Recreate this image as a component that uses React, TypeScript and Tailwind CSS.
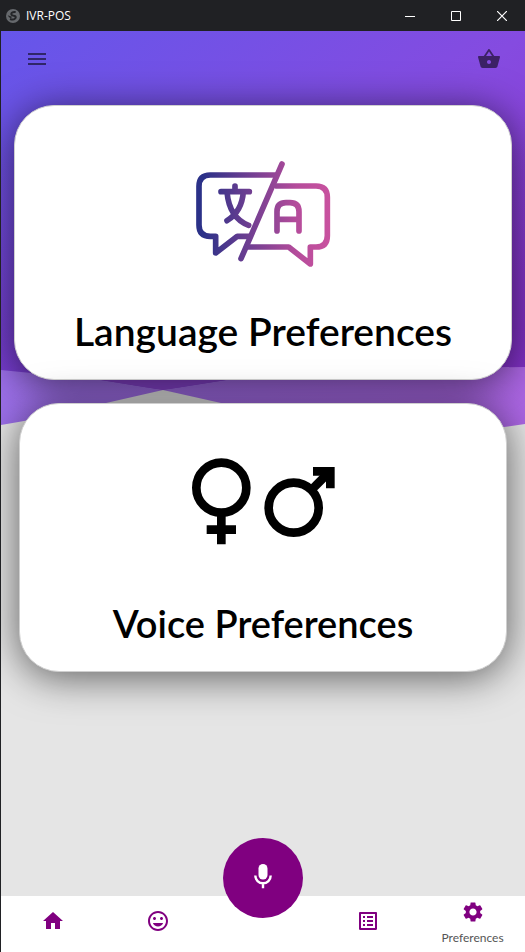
import type { ReactNode } from "react";
import { MdHome, MdListAlt, MdMenu, MdMood, MdSettings, MdShoppingBasket } from "react-icons/md";

function TitleBar() {
  return (
    <header className="flex h-[31px] shrink-0 items-center bg-[#202124] pl-[5px] text-white">
      <svg viewBox="0 0 42 42" className="size-[14px]" aria-hidden="true">
        <circle cx="21" cy="21" r="21" fill="#66696d" />
        <path d="M29 9Q17 8 16 14T26 21Q32 24 27 29T12 30" fill="none" stroke="#242528" strokeWidth="6" />
        <path d="M5 19L18 23L15 28Q8 26 5 19Z" fill="#242528" />
      </svg>
      <h1 className="ml-[6px] flex-1 font-['Open_Sans',sans-serif] text-xs">IVR-POS</h1>
      <button type="button" aria-label="Minimize" className="flex h-full w-[46px] items-center justify-center">
        <svg viewBox="0 0 10 10" className="size-[10px]" stroke="currentColor"><path d="M0 5.5h10" /></svg>
      </button>
      <button type="button" aria-label="Maximize" className="flex h-full w-[46px] items-center justify-center">
        <svg viewBox="0 0 10 10" className="size-[10px]" fill="none" stroke="currentColor"><path d="M.5.5h9v9h-9z" /></svg>
      </button>
      <button type="button" aria-label="Close" className="flex h-full w-[46px] items-center justify-center">
        <svg viewBox="0 0 10 10" className="size-[10px]" stroke="currentColor" strokeWidth="1.2"><path d="M0 0l10 10M10 0L0 10" /></svg>
      </button>
    </header>
  );
}

function Backdrop() {
  return (
    <svg viewBox="0 0 524 396" preserveAspectRatio="none" className="absolute inset-x-0 top-0 h-[396px] w-full" aria-hidden="true">
      <defs>
        <linearGradient id="sky" gradientUnits="userSpaceOnUse" x1="0" y1="0" x2="340" y2="400">
          <stop offset="0" stopColor="#6556ea" />
          <stop offset=".65" stopColor="#854be0" />
          <stop offset="1" stopColor="#8c3ad2" />
        </linearGradient>
        <linearGradient id="depth" x1="0" y1="0" x2="0" y2="1">
          <stop offset=".3" stopColor="#6a1fae" stopOpacity="0" />
          <stop offset="1" stopColor="#6a1fae" stopOpacity=".4" />
        </linearGradient>
        <linearGradient id="wave" x1="0" y1="0" x2="524" y2="0" gradientUnits="userSpaceOnUse">
          <stop offset="0" stopColor="#9c70ea" />
          <stop offset="1" stopColor="#ac66e4" />
        </linearGradient>
      </defs>
      <path d="M0 0H524V345L225 352L162 359L100 352L0 345Z" fill="url(#sky)" />
      <path d="M0 0H524V345L225 352L162 359L100 352L0 345Z" fill="url(#depth)" />
      <path d="M0 339L100 349L162 359L105 372Q60 384 0 394Z" fill="url(#wave)" />
      <path d="M162 359L225 349Q350 337 524 336V393L503 396Q330 396 220 372Z" fill="url(#wave)" />
      <path d="M100 349L162 359L225 349V340H100Z" fill="#8a44d2" />
    </svg>
  );
}

function LanguageIcon() {
  return (
    <svg viewBox="45 30 411 324" className="h-[108px] w-[137px]" fill="none" stroke="url(#ink)" strokeWidth="17" strokeLinecap="round" strokeLinejoin="round" aria-hidden="true">
      <defs>
        <linearGradient id="ink" gradientUnits="userSpaceOnUse" x1="50" y1="0" x2="450" y2="0">
          <stop offset=".05" stopColor="#2b3188" />
          <stop offset=".75" stopColor="#b54c9b" />
          <stop offset="1" stopColor="#c9529f" />
        </linearGradient>
      </defs>
      <path d="M306 42L183 326" />
      <path d="M285 75H91Q57 75 57 109V225Q57 259 91 259H107V309L172 259H206" />
      <path d="M290 108H408Q442 108 442 142V257Q442 291 408 291H391V342L326 291H207" />
      <path d="M123 125H208M165 108V124M141 126C145 170 163 210 206 226M190 126C187 165 172 193 141 212" />
      <path d="M291 243V185Q291 158 318 158H330Q357 158 357 185V243M292 208H356" />
    </svg>
  );
}

function VoiceIcon() {
  return (
    <svg viewBox="36 42 429 261" className="h-[87px] w-[143px]" fill="none" stroke="#000" strokeWidth="26" aria-hidden="true">
      <circle cx="124" cy="131" r="75" />
      <path d="M124 206V301M80 257H168" />
      <circle cx="341" cy="191" r="75" />
      <path d="M397 135L440 92" />
      <path d="M399 69H464V133H438V105L428 95H399Z" fill="#000" stroke="none" />
    </svg>
  );
}

function MicIcon() {
  return (
    <svg viewBox="0 2 40 40" className="size-10" aria-hidden="true">
      <rect x="15.5" y="8" width="9" height="15.6" rx="4.5" fill="#fff" />
      <path d="M12.3 19.6a7.7 7.7 0 0 0 15.4 0M20 27v5.3" fill="none" stroke="#fff" strokeWidth="2.4" />
    </svg>
  );
}

function PreferenceCard({ icon, title }: { icon: ReactNode; title: string }) {
  return (
    <button type="button" className="flex w-full flex-col items-center rounded-[40px] border border-[#cfcfcf] bg-white pt-[54px] pb-6 shadow-[0_5px_40px_rgba(0,0,0,0.6)]">
      {icon}
      {title}
    </button>
  );
}

function NavItem({ label, active, children }: { label: string; active?: boolean; children: ReactNode }) {
  return (
    <button type="button" aria-label={label} className="flex flex-1 flex-col items-center justify-center pt-1 pb-[10px] text-2xl text-[#800080] aria-[current=page]:pb-1" aria-current={active ? "page" : undefined}>
      {children}
      {active && <span className="mt-1 text-xs leading-5 text-[#555]">{label}</span>}
    </button>
  );
}

export default function App() {
  return (
    <div className="flex min-h-screen flex-col border-l border-[#202124] bg-[#e5e5e5] font-[Lato,sans-serif]">
      <TitleBar />
      <main className="relative flex-1 overflow-hidden">
        <Backdrop />
        <div className="relative">
          <div className="flex h-14 items-center justify-between px-6 text-2xl text-black/55">
            <button type="button" aria-label="Menu"><MdMenu /></button>
            <button type="button" aria-label="Basket"><MdShoppingBasket /></button>
          </div>
          <div className="px-[13px] pt-[18px] text-[39px] leading-12 font-semibold">
            <PreferenceCard icon={<span className="mb-[39px]"><LanguageIcon /></span>} title="Language Preferences" />
          </div>
          <div className="px-[18px] pt-[23px] text-[38px] leading-12 font-semibold">
            <PreferenceCard icon={<span className="mb-[54px]"><VoiceIcon /></span>} title="Voice Preferences" />
          </div>
        </div>
      </main>
      <nav className="relative flex h-14 shrink-0 bg-white">
        <NavItem label="Home"><MdHome /></NavItem>
        <NavItem label="Mood"><MdMood /></NavItem>
        <div className="flex-1" />
        <NavItem label="Orders"><MdListAlt /></NavItem>
        <NavItem label="Preferences" active><MdSettings /></NavItem>
        <button type="button" aria-label="Speak" className="absolute bottom-[34px] left-1/2 flex size-20 -translate-x-1/2 items-center justify-center rounded-full bg-[#800080]">
          <MicIcon />
        </button>
      </nav>
    </div>
  );
}
